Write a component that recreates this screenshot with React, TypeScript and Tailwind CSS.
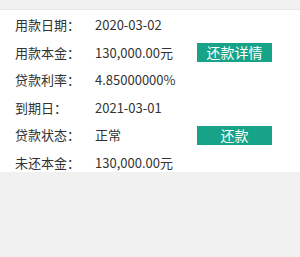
const rows = [
  { label: "用款日期：", value: "2020-03-02" },
  { label: "用款本金：", value: "130,000.00元", action: "还款详情" },
  { label: "贷款利率：", value: "4.85000000%" },
  { label: "到期日：", value: "2021-03-01" },
  { label: "贷款状态：", value: "正常", action: "还款" },
  { label: "未还本金：", value: "130,000.00元" },
];

export default function App() {
  return (
    <div className="h-[257px] w-[300px] bg-[#f1f1f1] font-['Noto_Sans_CJK_SC',sans-serif] text-[13px] text-[#333]">
      <div className="h-[10px] border-b border-[#e6e6e6]" />
      <div className="h-[162px] overflow-hidden bg-white pt-[1px]">
        {rows.map((r) => (
          <div key={r.label} className="flex h-[27.6px] items-center pl-[15px]">
            <span className="w-[80px]">{r.label}</span>
            <span className="w-[102px]">{r.value}</span>
            {r.action && (
              <button className="h-[19px] w-[75px] bg-[#16a388] text-[14px] leading-[19px] text-white">
                {r.action}
              </button>
            )}
          </div>
        ))}
      </div>
    </div>
  );
}
